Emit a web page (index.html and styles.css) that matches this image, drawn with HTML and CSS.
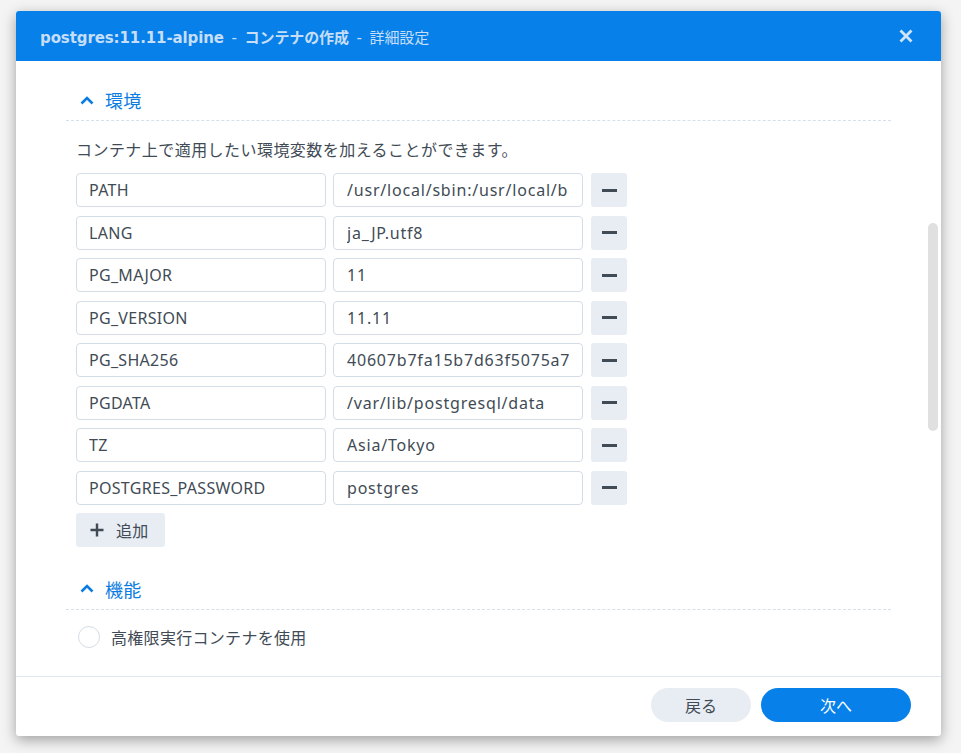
FILE: index.html
```html
<!DOCTYPE html>
<html lang="ja">
<head>
<meta charset="utf-8">
<link rel="stylesheet" href="styles.css">
</head>
<body>
<div class="window">
  <div class="titlebar">
    <div class="title"><b>postgres:11.11-alpine</b> - <b>コンテナの作成</b> - 詳細設定</div>
    <svg class="close" width="14" height="14" viewBox="0 0 14 14"><path d="M1.5 1.5 L12.5 12.5 M12.5 1.5 L1.5 12.5" stroke="#cfe5fb" stroke-width="2.8" stroke-linecap="butt"/></svg>
  </div>
  <div class="content">
    <div class="section-head">
      <svg class="chev" width="14" height="9" viewBox="0 0 14 9"><path d="M1.5 7.5 L7 2 L12.5 7.5" fill="none" stroke="#0a7ce2" stroke-width="2.6"/></svg>
      <span>環境</span>
    </div>
    <div class="section-body">
      <p class="desc">コンテナ上で適用したい環境変数を加えることができます。</p>
      <div class="rows">
        <div class="row"><div class="field"><span>PATH</span></div><div class="field val"><span>/usr/local/sbin:/usr/local/b</span></div><div class="minus"><i></i></div></div>
        <div class="row"><div class="field"><span>LANG</span></div><div class="field val"><span>ja_JP.utf8</span></div><div class="minus"><i></i></div></div>
        <div class="row"><div class="field"><span>PG_MAJOR</span></div><div class="field val"><span>11</span></div><div class="minus"><i></i></div></div>
        <div class="row"><div class="field"><span>PG_VERSION</span></div><div class="field val"><span>11.11</span></div><div class="minus"><i></i></div></div>
        <div class="row"><div class="field"><span>PG_SHA256</span></div><div class="field val"><span>40607b7fa15b7d63f5075a7</span></div><div class="minus"><i></i></div></div>
        <div class="row"><div class="field"><span>PGDATA</span></div><div class="field val"><span>/var/lib/postgresql/data</span></div><div class="minus"><i></i></div></div>
        <div class="row"><div class="field"><span>TZ</span></div><div class="field val"><span>Asia/Tokyo</span></div><div class="minus"><i></i></div></div>
        <div class="row"><div class="field"><span>POSTGRES_PASSWORD</span></div><div class="field val"><span>postgres</span></div><div class="minus"><i></i></div></div>
      </div>
      <div class="add"><svg width="14" height="14" viewBox="0 0 14 14"><path d="M7 0.5 V13.5 M0.5 7 H13.5" stroke="#414b55" stroke-width="2.4"/></svg><span>追加</span></div>
    </div>
    <div class="section-head second">
      <svg class="chev" width="14" height="9" viewBox="0 0 14 9"><path d="M1.5 7.5 L7 2 L12.5 7.5" fill="none" stroke="#0a7ce2" stroke-width="2.6"/></svg>
      <span>機能</span>
    </div>
    <div class="section-body">
      <div class="radio-row"><span class="radio"></span><span>高権限実行コンテナを使用</span></div>
    </div>
    <div class="scrollbar"></div>
  </div>
  <div class="footer">
    <div class="btn back">戻る</div>
    <div class="btn next">次へ</div>
  </div>
</div>
</body>
</html>
```
FILE: styles.css
```css
* { box-sizing: border-box; }
html, body { margin: 0; padding: 0; }
body {
  background: #f4f4f4;
  width: 961px;
  height: 753px;
  overflow: hidden;
  font-family: "Noto Sans", "Noto Sans CJK JP", sans-serif;
  color: #414b55;
}
.window {
  margin: 11px 0 0 16px;
  width: 925px;
  height: 725px;
  background: #fff;
  border-radius: 3px;
  box-shadow: 0 4px 14px rgba(0,0,0,0.35);
  display: flex;
  flex-direction: column;
  overflow: hidden;
}
.titlebar {
  height: 50px;
  flex: none;
  background: #0780ea;
  display: flex;
  align-items: center;
  justify-content: space-between;
  padding: 0 28px 0 24px;
}
.title {
  font-family: "DejaVu Sans", "Noto Sans CJK JP", sans-serif;
  font-size: 15px;
  color: #c6def7;
  letter-spacing: -0.1px;
  word-spacing: 3px;
}
.title b { font-weight: bold; }
.close { display: block; }
.content {
  flex: 1;
  position: relative;
  padding: 20px 50px 0 50px;
  overflow: hidden;
  letter-spacing: 0.3px;
}
.section-head {
  height: 40px;
  display: flex;
  align-items: center;
  gap: 11px;
  padding-left: 14px;
  padding-bottom: 1px;
  border-bottom: 1px dashed #d5e0ea;
  color: #0a7ce2;
  font-size: 18px;
}
.section-head.second { margin-top: 23px; }
.section-body { padding-left: 10px; }
.desc {
  margin: 17px 0 11px;
  font-size: 16px;
  line-height: 24px;
  color: #414b55;
  letter-spacing: 0.45px;
}
.rows {
  display: flex;
  flex-direction: column;
  gap: 8.5px;
}
.row {
  display: flex;
  align-items: center;
  height: 34px;
}
.field {
  width: 250px;
  height: 34px;
  border: 1px solid #d3dde7;
  border-radius: 4px;
  padding: 0 12px;
  font-size: 16px;
  line-height: 32px;
  color: #414b55;
  margin-right: 7px;
}
.field.val {
  margin-right: 8px;
  padding-left: 13px;
  letter-spacing: 0.8px;
}
.field span {
  display: block;
  white-space: nowrap;
  overflow: hidden;
}
.minus {
  width: 36px;
  height: 34px;
  background: #e8edf3;
  border-radius: 3px;
  display: flex;
  align-items: center;
  justify-content: center;
}
.minus i {
  display: block;
  width: 15px;
  height: 3px;
  background: #414b55;
}
.add {
  margin-top: 8px;
  width: 89px;
  height: 34px;
  background: #e8edf3;
  border-radius: 3px;
  display: flex;
  align-items: center;
  padding-left: 14px;
  gap: 12px;
  font-size: 16px;
  color: #414b55;
}
.add svg { display: block; }
.radio-row {
  margin-top: 15px;
  display: flex;
  align-items: center;
  gap: 11px;
  font-size: 16px;
  padding-left: 2px;
}
.radio {
  width: 22px;
  height: 22px;
  border: 1.5px solid #d5dde6;
  border-radius: 50%;
  flex: none;
}
.scrollbar {
  position: absolute;
  right: 3px;
  top: 162px;
  width: 10px;
  height: 208px;
  border-radius: 5px;
  background: #e0e0e0;
}
.footer {
  height: 60px;
  flex: none;
  border-top: 1px solid #e2e8ee;
  display: flex;
  justify-content: flex-end;
  align-items: flex-start;
  padding: 11px 30px 0 0;
  gap: 10px;
}
.btn {
  height: 34px;
  border-radius: 17px;
  display: flex;
  align-items: center;
  justify-content: center;
  font-size: 16px;
}
.back { width: 100px; background: #e8edf3; color: #414b55; }
.next { width: 150px; background: #0780ea; color: #fff; }
```
